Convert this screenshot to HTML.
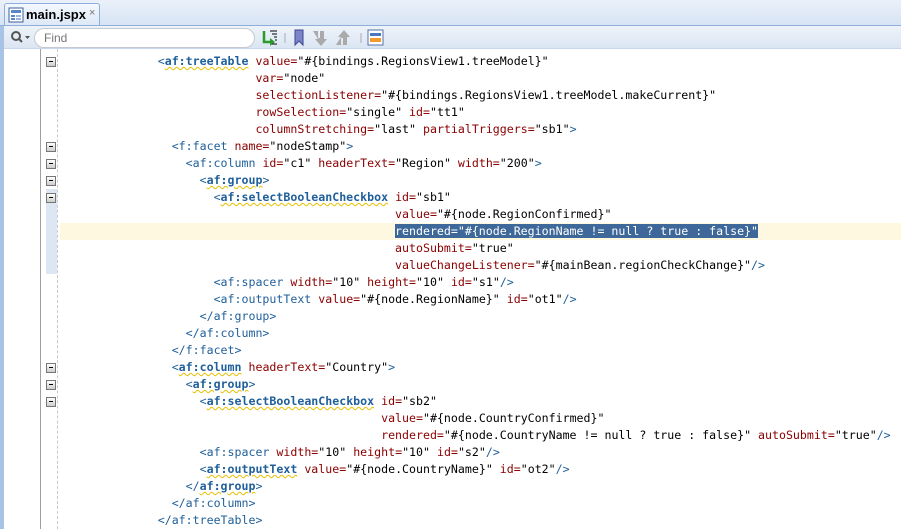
<!DOCTYPE html>
<html><head><meta charset="utf-8"><style>
*{margin:0;padding:0;box-sizing:border-box}
body{width:901px;height:529px;overflow:hidden;background:#fff;position:relative;font-family:"Liberation Sans",sans-serif}
#top{position:absolute;left:0;top:0;width:901px;height:26px;background:linear-gradient(#eaf1fa,#d6e3f3)}
#tab{position:absolute;left:4px;top:3px;width:96px;height:24px;background:linear-gradient(#f4f8fd,#dbe7f6);border:1px solid #8eaedb;border-bottom:none;border-radius:3px 3px 0 0}
#tab b{position:absolute;left:21px;top:3px;font-size:13px;color:#000}
#tab i{position:absolute;left:84px;top:3px;font-style:normal;font-size:11px;color:#777}
#tbar{position:absolute;left:0;top:25px;width:901px;height:24px;background:linear-gradient(#eef3fa,#dbe6f3);border-top:1px solid #8eaedb;border-bottom:1px solid #c7d6ea}
#find{position:absolute;left:34px;top:2px;width:221px;height:20px;border:1px solid #c5c9d0;border-radius:10px;background:#fff;font-size:12px;color:#777;padding:2px 0 0 9px}
#lb{position:absolute;left:0;top:26px;width:4px;height:503px;background:#a8c3e6}
#gl{position:absolute;left:40px;top:49px;width:1px;height:480px;background:#a0a0a0}
#dl{position:absolute;left:57px;top:49px;width:0;height:480px;border-left:1px dashed #c8c8c8}
#blue{position:absolute;left:46px;top:189px;width:11px;height:85px;background:#dde7f3}
#hl{position:absolute;left:60px;top:223px;width:841px;height:17px;background:#fff8e1}
.f{position:absolute;left:46px;width:10px;height:10px;border:1px solid #777;background:linear-gradient(#fff,#ccc)}
.f::after{content:"";position:absolute;left:2px;top:3px;width:4px;height:1px;background:#000}
pre{position:absolute;left:60px;top:53px;font-family:"DejaVu Sans Mono","Liberation Mono",monospace;font-size:11.6px;line-height:17px;color:#000}
.t{color:#1f5f9a}.a{color:#8b0000}
.t b{font-weight:bold;text-decoration:underline wavy #e8c000;text-decoration-thickness:1px}
.sel{background:#3e6899;color:#fff}
</style></head><body>
<div id="top"><div id="tab">
<svg style="position:absolute;left:3px;top:3px" width="16" height="16"><rect x="1" y="1" width="14" height="14" fill="#fff" stroke="#3d5f9a"/><rect x="3" y="3" width="10" height="3" fill="#5a85c8"/><rect x="3" y="8" width="4" height="2" fill="#5a85c8"/><rect x="8" y="8" width="5" height="2" fill="#9bb4d9"/><rect x="3" y="11" width="4" height="2" fill="#5a85c8"/><rect x="8" y="11" width="5" height="2" fill="#9bb4d9"/></svg>
<b>main.jspx</b><i>×</i></div></div>
<div id="tbar">
<svg style="position:absolute;left:10px;top:4px" width="22" height="14"><circle cx="6" cy="6" r="4" fill="none" stroke="#555" stroke-width="2"/><line x1="9" y1="9" x2="12" y2="12" stroke="#555" stroke-width="2"/><path d="M15 6h5l-2.5 3z" fill="#555"/></svg>
<div id="find">Find</div>
<svg style="position:absolute;left:260px;top:3px" width="130" height="18">
<path d="M4 2v11h7" fill="none" stroke="#2a9a2a" stroke-width="2.5"/><path d="M10 9l5 4-5 4z" fill="#2a9a2a"/><path d="M10 2h7M12 5h5M14 8h3M15 11h2M12 15h5" stroke="#333" stroke-width="1.2"/>
<line x1="25" y1="4" x2="25" y2="14" stroke="#aab"/>
<path d="M35 1h8v15l-4-4-4 4z" fill="#7b83c9" stroke="#3c4593"/>
<path d="M53 2h5v7h2v-7h4v8h3l-6 7-6-7h3z" fill="#aaa"/>
<path d="M76 16h5v-7h2v7h4v-8h3l-6-7-6 7h3z" fill="#aaa"/>
<line x1="101" y1="4" x2="101" y2="14" stroke="#aab"/>
<rect x="108" y="1" width="15" height="15" fill="#fff" stroke="#5571a9"/><rect x="110" y="4" width="11" height="3" fill="#4a78c0"/><rect x="110" y="9" width="11" height="4" fill="#f29a2e"/>
</svg>
</div>
<div id="lb"></div><div id="gl"></div><div id="blue"></div><div id="dl"></div><div id="hl"></div>
<div class="f" style="top:57px"></div><div class="f" style="top:142px"></div><div class="f" style="top:159px"></div><div class="f" style="top:176px"></div><div class="f" style="top:193px"></div><div class="f" style="top:363px"></div><div class="f" style="top:380px"></div><div class="f" style="top:397px"></div>
<pre>              <span class="t">&lt;<b>af:treeTable</b></span> <span class="a">value=</span>"#{bindings.RegionsView1.treeModel}"
                            <span class="a">var=</span>"node"
                            <span class="a">selectionListener=</span>"#{bindings.RegionsView1.treeModel.makeCurrent}"
                            <span class="a">rowSelection=</span>"single" <span class="a">id=</span>"tt1"
                            <span class="a">columnStretching=</span>"last" <span class="a">partialTriggers=</span>"sb1"<span class="t">&gt;</span>
                <span class="t">&lt;f:facet</span> <span class="a">name=</span>"nodeStamp"<span class="t">&gt;</span>
                  <span class="t">&lt;af:column</span> <span class="a">id=</span>"c1" <span class="a">headerText=</span>"Region" <span class="a">width=</span>"200"<span class="t">&gt;</span>
                    <span class="t">&lt;<b>af:group</b>&gt;</span>
                      <span class="t">&lt;<b>af:selectBooleanCheckbox</b></span> <span class="a">id=</span>"sb1"
                                                <span class="a">value=</span>"#{node.RegionConfirmed}"
                                                <span class="sel">rendered="#{node.RegionName != null ? true : false}"</span>
                                                <span class="a">autoSubmit=</span>"true"
                                                <span class="a">valueChangeListener=</span>"#{mainBean.regionCheckChange}"<span class="t">/&gt;</span>
                      <span class="t">&lt;af:spacer</span> <span class="a">width=</span>"10" <span class="a">height=</span>"10" <span class="a">id=</span>"s1"<span class="t">/&gt;</span>
                      <span class="t">&lt;af:outputText</span> <span class="a">value=</span>"#{node.RegionName}" <span class="a">id=</span>"ot1"<span class="t">/&gt;</span>
                    <span class="t">&lt;/af:group&gt;</span>
                  <span class="t">&lt;/af:column&gt;</span>
                <span class="t">&lt;/f:facet&gt;</span>
                <span class="t">&lt;<b>af:column</b></span> <span class="a">headerText=</span>"Country"<span class="t">&gt;</span>
                  <span class="t">&lt;<b>af:group</b>&gt;</span>
                    <span class="t">&lt;<b>af:selectBooleanCheckbox</b></span> <span class="a">id=</span>"sb2"
                                              <span class="a">value=</span>"#{node.CountryConfirmed}"
                                              <span class="a">rendered=</span>"#{node.CountryName != null ? true : false}" <span class="a">autoSubmit=</span>"true"<span class="t">/&gt;</span>
                    <span class="t">&lt;af:spacer</span> <span class="a">width=</span>"10" <span class="a">height=</span>"10" <span class="a">id=</span>"s2"<span class="t">/&gt;</span>
                    <span class="t">&lt;<b>af:outputText</b></span> <span class="a">value=</span>"#{node.CountryName}" <span class="a">id=</span>"ot2"<span class="t">/&gt;</span>
                  <span class="t">&lt;/<b>af:group</b>&gt;</span>
                <span class="t">&lt;/af:column&gt;</span>
              <span class="t">&lt;/af:treeTable&gt;</span></pre>
</body></html>
